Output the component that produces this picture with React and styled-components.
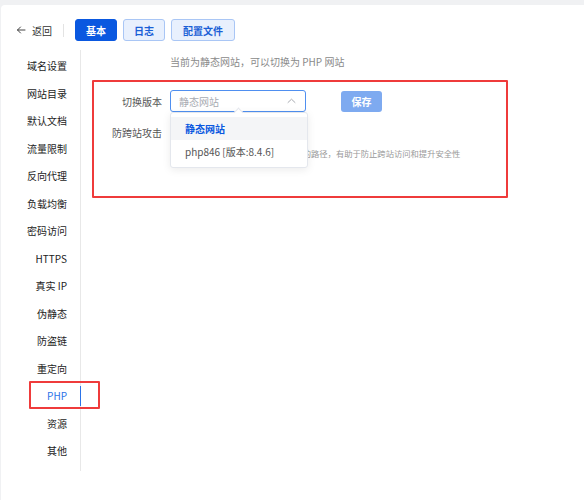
import React from 'react'
import styled, { createGlobalStyle } from 'styled-components'

const GlobalStyle = createGlobalStyle`
  html, body {
    margin: 0;
    padding: 0;
    background: #f0f1f3;
    font-family: "Noto Sans CJK SC", "Noto Sans", sans-serif;
    -webkit-font-smoothing: antialiased;
  }
  #root {
    padding-top: 5px;
  }
`

const blue = '#0a58e0'

const ui = {
  Card: styled.div`
    margin-left: 1px;
    background: #fff;
    border-radius: 4px 0 0 0;
    height: 495px;
    position: relative;
  `,
  Header: styled.div`
    display: flex;
    align-items: center;
    padding: 14px 0 9px 15px;
  `,
  Back: styled.div`
    display: flex;
    align-items: center;
    gap: 6px;
    font-size: 10px;
    color: #333;
  `,
  Divider: styled.div`
    width: 1px;
    height: 13px;
    background: #e3e3e3;
    margin: 0 11px 0 11px;
  `,
  Tabs: styled.div`
    display: flex;
    gap: 6px;
  `,
  Tab: styled.div`
    height: 22px;
    box-sizing: border-box;
    padding: 0 ${p => (p.$wide ? 11 : 10)}px;
    display: flex;
    align-items: center;
    border-radius: 3px;
    font-size: 10px;
    font-weight: 700;
    border: 1px solid ${p => (p.$active ? blue : '#a9c6f5')};
    background: ${p => (p.$active ? blue : '#e8f0fd')};
    color: ${p => (p.$active ? '#fff' : '#1a5fd6')};
  `,
  Body: styled.div`
    display: flex;
    position: relative;
  `,
  Sidebar: styled.div`
    width: 79px;
    border-right: 1px solid #e8e8e8;
    padding: 2px 0 6px;
    height: 413px;
  `,
  NavItem: styled.div`
    height: 27.5px;
    display: flex;
    align-items: center;
    justify-content: flex-end;
    padding-right: 13px;
    font-size: 10px;
    font-weight: 400;
    color: ${p => (p.$active ? '#2b73e8' : '#1c1c1c')};
    position: relative;
    &::after {
      content: '';
      display: ${p => (p.$active ? 'block' : 'none')};
      position: absolute;
      right: -1px;
      top: 4px;
      bottom: 4px;
      width: 1px;
      background: #2b73e8;
    }
  `,
  Content: styled.div`
    flex: 1;
    position: relative;
    padding-top: 4px;
  `,
  Note: styled.div`
    padding-left: 89px;
    font-size: 10px;
    color: #8a8a8a;
    line-height: 16px;
  `,
  Form: styled.div`
    margin-top: 20px;
    display: grid;
    grid-template-columns: 81px auto;
    column-gap: 8px;
    row-gap: 13px;
    align-items: center;
  `,
  Label: styled.div`
    font-size: 10px;
    color: #555;
    text-align: right;
  `,
  Controls: styled.div`
    display: flex;
    align-items: center;
    gap: 35px;
  `,
  Select: styled.div`
    width: 136px;
    height: 22px;
    box-sizing: border-box;
    border: 1px solid #4f8ff0;
    border-radius: 3px;
    display: flex;
    align-items: center;
    justify-content: space-between;
    padding: 0 9px 0 8px;
    font-size: 10px;
    color: #a8abb2;
  `,
  SaveButton: styled.div`
    width: 41px;
    height: 21px;
    border-radius: 3px;
    background: #7eaaf0;
    color: #fff;
    font-size: 10px;
    font-weight: 700;
    display: flex;
    align-items: center;
    justify-content: center;
  `,
  Switch: styled.div`
    height: 14px;
  `,
  Hint: styled.div`
    grid-column: 2;
    margin-top: -6px;
    font-size: 8.3px;
    color: #999;
    white-space: nowrap;
  `,
  Dropdown: styled.div`
    position: absolute;
    left: 89px;
    top: 62px;
    width: 138px;
    box-sizing: border-box;
    padding: 4px 0;
    background: #fff;
    border: 1px solid #e4e7ed;
    border-radius: 3px;
    box-shadow: 0 2px 8px rgba(0, 0, 0, 0.08);
    &::before {
      content: '';
      position: absolute;
      top: -4px;
      left: 64px;
      width: 6px;
      height: 6px;
      background: #fff;
      border-left: 1px solid #e4e7ed;
      border-top: 1px solid #e4e7ed;
      transform: rotate(45deg);
    }
  `,
  Option: styled.div`
    height: 23px;
    display: flex;
    align-items: center;
    padding-left: 14px;
    font-size: 10px;
    position: relative;
    background: ${p => (p.$selected ? '#f4f5f7' : '#fff')};
    color: ${p => (p.$selected ? blue : '#555')};
    font-weight: ${p => (p.$selected ? 700 : 400)};
  `,
  Mark: styled.div`
    position: absolute;
    border: 2px solid #ef3b3b;
    box-sizing: border-box;
    border-radius: 1px;
  `,
}

const navItems = ['域名设置', '网站目录', '默认文档', '流量限制', '反向代理', '负载均衡', '密码访问', 'HTTPS', '真实 IP', '伪静态', '防盗链', '重定向', 'PHP', '资源', '其他']

const BackArrow = () => (
  <svg width="10" height="10" viewBox="0 0 10 10" fill="none" stroke="#444" strokeWidth="1" strokeLinecap="round" strokeLinejoin="round">
    <path d="M9 5H1.5M4.5 2L1.5 5l3 3" />
  </svg>
)

const ChevronUp = () => (
  <svg width="9" height="6" viewBox="0 0 9 6" fill="none" stroke="#a8abb2" strokeWidth="1" strokeLinecap="round" strokeLinejoin="round">
    <path d="M1 4.5L4.5 1.2 8 4.5" />
  </svg>
)

const App = () => (
  <>
    <GlobalStyle />
    <ui.Card>
      <ui.Header>
        <ui.Back>
          <BackArrow />
          <span>返回</span>
        </ui.Back>
        <ui.Divider />
        <ui.Tabs>
          <ui.Tab $active>基本</ui.Tab>
          <ui.Tab>日志</ui.Tab>
          <ui.Tab $wide>配置文件</ui.Tab>
        </ui.Tabs>
      </ui.Header>

      <ui.Body>
        <ui.Sidebar>
          {navItems.map(item => (
            <ui.NavItem key={item} $active={item === 'PHP'}>{item}</ui.NavItem>
          ))}
        </ui.Sidebar>

        <ui.Content>
          <ui.Note>当前为静态网站，可以切换为 PHP 网站</ui.Note>
          <ui.Form>
            <ui.Label>切换版本</ui.Label>
            <ui.Controls>
              <ui.Select>
                <span>静态网站</span>
                <ChevronUp />
              </ui.Select>
              <ui.SaveButton>保存</ui.SaveButton>
            </ui.Controls>
            <ui.Label>防跨站攻击</ui.Label>
            <ui.Switch />
            <ui.Hint>开启后限制PHP只能访问网站目录内的路径，有助于防止跨站访问和提升安全性</ui.Hint>
          </ui.Form>

          <ui.Dropdown>
            <ui.Option $selected>静态网站</ui.Option>
            <ui.Option>php846 [版本:8.4.6]</ui.Option>
          </ui.Dropdown>

          <ui.Mark style={{ left: 11, top: 30, width: 416, height: 118 }} />
        </ui.Content>

        <ui.Mark style={{ left: 28, top: 331, width: 71, height: 28 }} />
      </ui.Body>
    </ui.Card>
  </>
)

export default App
